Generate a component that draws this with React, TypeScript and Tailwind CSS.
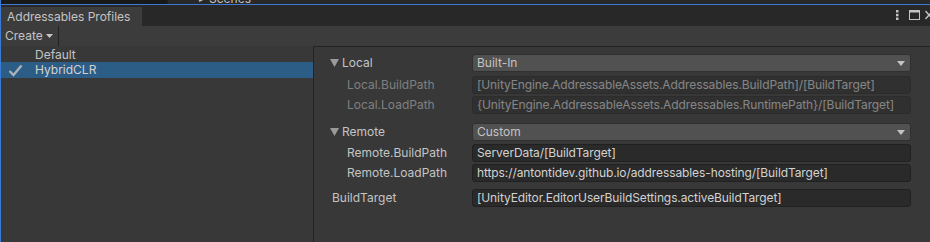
import React from "react";

const font = { fontFamily: "Inter, 'Noto Sans', sans-serif" };

function Dropdown({ value }: { value: string }) {
  return (
    <div className="flex h-[18px] flex-1 items-center justify-between rounded-[3px] border border-[#303030] bg-[#515151] pl-[4px] pr-[5px] text-[#c4c4c4]">
      <span>{value}</span>
      <svg width="8" height="5" viewBox="0 0 8 5">
        <path d="M0 0 H8 L4 5 Z" fill="#c4c4c4" />
      </svg>
    </div>
  );
}

function Field({ value }: { value: string }) {
  return (
    <div className="flex h-[18px] flex-1 items-center overflow-hidden whitespace-nowrap rounded-[3px] border border-[#212121] bg-[#2a2a2a] pl-[4px] tracking-[-0.1px] text-[#d2d2d2]">
      {value}
    </div>
  );
}

function Row({
  label,
  indent,
  foldout,
  disabled,
  className,
  children,
}: {
  label: string;
  indent: string;
  foldout?: boolean;
  disabled?: boolean;
  className?: string;
  children: React.ReactNode;
}) {
  return (
    <div className={`flex h-[18px] items-center pr-[19px] ${disabled ? "opacity-50" : ""} ${className ?? ""}`}>
      <div className={`flex w-[158px] items-center text-[#c4c4c4] ${indent}`}>
        {foldout && (
          <svg width="9" height="8" viewBox="0 0 9 8" className="mr-[3px]">
            <path d="M0 0 H9 L4.5 8 Z" fill="#9a9a9a" />
          </svg>
        )}
        <span>{label}</span>
      </div>
      {children}
    </div>
  );
}

export default function App() {
  return (
    <div className="flex h-[242px] w-[930px] flex-col overflow-hidden border-l border-[#3b7bd6] bg-[#383838] text-[12px]" style={font}>
      {/* docked neighbour window peeking above */}
      <div className="flex h-[4px]">
        <div className="w-[166px] bg-[#191919]" />
        <div className="flex-1 overflow-hidden border-l border-[#1e1e1e] bg-[#282828]">
          <div className="-mt-[10px] ml-[31px] flex items-center gap-[5px] text-[#c4c4c4]">
            <span className="text-[9px]">▸</span>
            <span>Scenes</span>
          </div>
        </div>
      </div>
      <div className="h-px bg-[#3b7bd6]" />

      {/* tab bar */}
      <div className="flex h-[21px] items-end bg-[#282828]">
        <div className="flex h-[19px] w-[141px] items-center bg-[#3c3c3c] pl-[6px] text-[#c4c4c4]">
          Addressables Profiles
        </div>
        <div className="flex-1" />
        <div className="mb-[6px] mr-[-3px] flex items-center self-end">
          <svg width="3" height="10" viewBox="0 0 3 10" className="mr-[10px]">
            <rect x="0" y="0" width="2.5" height="2.5" fill="#c4c4c4" />
            <rect x="0" y="3.8" width="2.5" height="2.5" fill="#c4c4c4" />
            <rect x="0" y="7.5" width="2.5" height="2.5" fill="#c4c4c4" />
          </svg>
          <svg width="11" height="10" viewBox="0 0 11 10" className="mr-[5px]">
            <rect x="0.5" y="0.5" width="10" height="9" fill="none" stroke="#c4c4c4" />
            <rect x="0.5" y="0.5" width="10" height="2" fill="#c4c4c4" />
          </svg>
          <svg width="8" height="10" viewBox="0 0 8 10">
            <path d="M0.5 1 L7.5 9 M7.5 1 L0.5 9" stroke="#c4c4c4" strokeWidth="1.4" />
          </svg>
        </div>
      </div>

      {/* toolbar */}
      <div className="flex h-[20px] items-center bg-[#3c3c3c]">
        <div className="flex h-full w-[58px] items-center gap-[3px] border-r border-[#232323] pl-[4px] text-[#c4c4c4]">
          <span>Create</span>
          <svg width="7" height="4" viewBox="0 0 7 4">
            <path d="M0 0 H7 L3.5 4 Z" fill="#c4c4c4" />
          </svg>
        </div>
      </div>

      <div className="flex flex-1">
        {/* profile list */}
        <div className="w-[312px]">
          <div className="flex h-[16px] items-center pl-[34px] pt-px text-[#c4c4c4]">Default</div>
          <div className="flex h-[16px] items-center bg-[#2c5d87] text-[#d2d2d2]">
            <svg width="15" height="13" viewBox="0 0 15 13" className="ml-[7px] mr-[12px]">
              <path d="M1.5 7 L5.5 11 L13.5 1.5" fill="none" stroke="#aab3bb" strokeWidth="2.4" />
            </svg>
            <span>HybridCLR</span>
          </div>
        </div>

        {/* profile settings */}
        <div className="flex flex-1 flex-col border-l border-t border-[#232323] pt-[7px]">
          <Row label="Local" indent="pl-[16px]" foldout>
            <Dropdown value="Built-In" />
          </Row>
          <Row label="Local.BuildPath" indent="pl-[33px]" disabled className="mt-[4px]">
            <Field value="[UnityEngine.AddressableAssets.Addressables.BuildPath]/[BuildTarget]" />
          </Row>
          <Row label="Local.LoadPath" indent="pl-[33px]" disabled className="mt-[2px]">
            <Field value="{UnityEngine.AddressableAssets.Addressables.RuntimePath}/[BuildTarget]" />
          </Row>
          <Row label="Remote" indent="pl-[16px]" foldout className="mt-[9px]">
            <Dropdown value="Custom" />
          </Row>
          <Row label="Remote.BuildPath" indent="pl-[33px]" className="mt-[3px]">
            <Field value="ServerData/[BuildTarget]" />
          </Row>
          <Row label="Remote.LoadPath" indent="pl-[33px]" className="mt-[2px]">
            <Field value="https://antontidev.github.io/addressables-hosting/[BuildTarget]" />
          </Row>
          <Row label="BuildTarget" indent="pl-[18px]" className="mt-[7px]">
            <Field value="[UnityEditor.EditorUserBuildSettings.activeBuildTarget]" />
          </Row>
        </div>
      </div>
    </div>
  );
}
